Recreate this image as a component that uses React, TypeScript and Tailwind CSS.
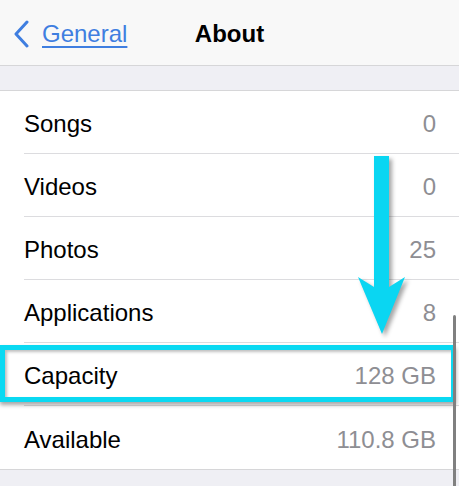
const rows = [
  { label: 'Songs', value: '0' },
  { label: 'Videos', value: '0' },
  { label: 'Photos', value: '25' },
  { label: 'Applications', value: '8' },
  { label: 'Capacity', value: '128 GB', highlight: true },
  { label: 'Available', value: '110.8 GB' },
]

export default function App() {
  return (
    <div
      className="relative w-[459px] h-[486px] overflow-hidden bg-[#efeff4]"
      style={{ fontFamily: '"Liberation Sans", Arial, sans-serif' }}
    >
      {/* nav bar */}
      <div className="relative h-[66px] bg-[#f8f8f8] border-b border-[#d6d6d8] flex items-center pt-[2px]">
        <div className="flex items-center pl-[12px] gap-[12px] text-[#3f7ee0]">
          <svg width="18" height="28" viewBox="0 0 18 28" fill="none">
            <path d="M15 2 L4 14 L15 26" stroke="currentColor" strokeWidth="3" strokeLinecap="round" strokeLinejoin="round" />
          </svg>
          <span className="text-[24px] leading-none underline underline-offset-[4px] decoration-[1.5px]">General</span>
        </div>
        <div className="absolute inset-x-0 top-0 h-full flex items-center justify-center pt-[2px] pointer-events-none">
          <span className="text-[24px] font-bold text-black leading-none">About</span>
        </div>
      </div>

      {/* gray gap */}
      <div className="h-[25px] border-b border-[#d6d6d8]" />

      {/* list */}
      <div className="bg-white border-b border-[#d6d6d8]">
        {rows.map((row, i) => (
          <div key={row.label} className="relative pl-[24px]">
            <div
              className={
                'h-[63px] flex items-center justify-between pr-[23px] pt-[4px] ' +
                (i < rows.length - 1 ? 'border-b border-[#dcdcdf]' : '')
              }
            >
              <span className="text-[24px] text-black">{row.label}</span>
              <span className="text-[24px] text-[#8e8e93]">{row.value}</span>
            </div>
            {row.highlight && (
              <div className="absolute left-0 w-[456px] top-[2px] h-[57px] border-[5px] border-[#0ad9f2] shadow-[0_3px_4px_rgba(0,0,0,0.35),inset_2px_2px_3px_rgba(0,0,0,0.25)]" />
            )}
          </div>
        ))}
      </div>

      {/* scrollbar */}
      <div className="absolute left-[453px] top-[315px] w-[3px] h-[180px] rounded-full bg-[#808080]" />

      {/* arrow */}
      <svg
        className="absolute left-0 top-0 pointer-events-none"
        width="459"
        height="486"
        style={{ filter: 'drop-shadow(3px 3px 2px rgba(0,0,0,0.35))' }}
      >
        <polygon
          points="374,156 389,156 389,287 405,277 382,334 358,277 374,287"
          fill="#0ad6f2"
        />
      </svg>
    </div>
  )
}
